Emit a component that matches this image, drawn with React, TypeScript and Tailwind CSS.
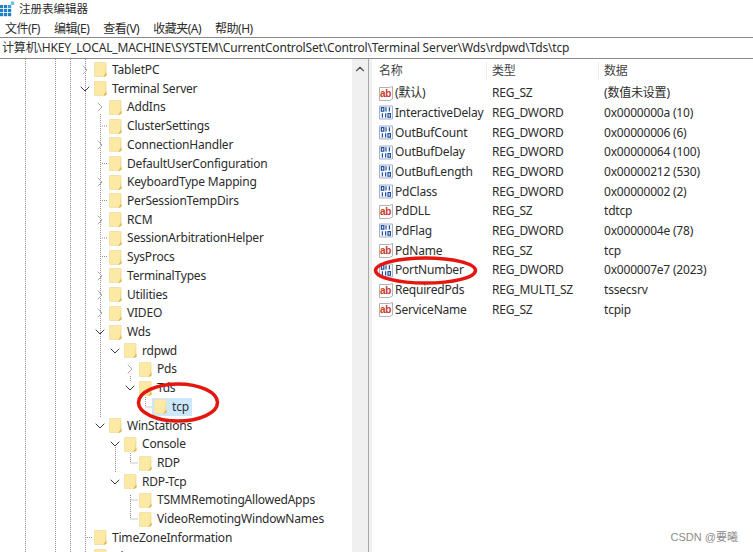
import React from 'react';
import { ChevronDown, ChevronRight, ChevronUp } from 'lucide-react';

type TreeRow = { label: string; level: number; arrow?: 'open' | 'closed'; selected?: boolean };

const treeRows: TreeRow[] = [
  { label: 'TabletPC', level: 0, arrow: 'closed' },
  { label: 'Terminal Server', level: 0, arrow: 'open' },
  { label: 'AddIns', level: 1, arrow: 'closed' },
  { label: 'ClusterSettings', level: 1 },
  { label: 'ConnectionHandler', level: 1, arrow: 'closed' },
  { label: 'DefaultUserConfiguration', level: 1 },
  { label: 'KeyboardType Mapping', level: 1, arrow: 'closed' },
  { label: 'PerSessionTempDirs', level: 1 },
  { label: 'RCM', level: 1, arrow: 'closed' },
  { label: 'SessionArbitrationHelper', level: 1 },
  { label: 'SysProcs', level: 1 },
  { label: 'TerminalTypes', level: 1, arrow: 'closed' },
  { label: 'Utilities', level: 1, arrow: 'closed' },
  { label: 'VIDEO', level: 1, arrow: 'closed' },
  { label: 'Wds', level: 1, arrow: 'open' },
  { label: 'rdpwd', level: 2, arrow: 'open' },
  { label: 'Pds', level: 3, arrow: 'closed' },
  { label: 'Tds', level: 3, arrow: 'open' },
  { label: 'tcp', level: 4, selected: true },
  { label: 'WinStations', level: 1, arrow: 'open' },
  { label: 'Console', level: 2, arrow: 'open' },
  { label: 'RDP', level: 3 },
  { label: 'RDP-Tcp', level: 2, arrow: 'open' },
  { label: 'TSMMRemotingAllowedApps', level: 3 },
  { label: 'VideoRemotingWindowNames', level: 3 },
  { label: 'TimeZoneInformation', level: 0 },
  { label: 'Ubpm', level: 0 },
];

const values: { name: string; type: string; data: string; kind: 'sz' | 'bin' }[] = [
  { name: '(默认)', type: 'REG_SZ', data: '(数值未设置)', kind: 'sz' },
  { name: 'InteractiveDelay', type: 'REG_DWORD', data: '0x0000000a (10)', kind: 'bin' },
  { name: 'OutBufCount', type: 'REG_DWORD', data: '0x00000006 (6)', kind: 'bin' },
  { name: 'OutBufDelay', type: 'REG_DWORD', data: '0x00000064 (100)', kind: 'bin' },
  { name: 'OutBufLength', type: 'REG_DWORD', data: '0x00000212 (530)', kind: 'bin' },
  { name: 'PdClass', type: 'REG_DWORD', data: '0x00000002 (2)', kind: 'bin' },
  { name: 'PdDLL', type: 'REG_SZ', data: 'tdtcp', kind: 'sz' },
  { name: 'PdFlag', type: 'REG_DWORD', data: '0x0000004e (78)', kind: 'bin' },
  { name: 'PdName', type: 'REG_SZ', data: 'tcp', kind: 'sz' },
  { name: 'PortNumber', type: 'REG_DWORD', data: '0x000007e7 (2023)', kind: 'bin' },
  { name: 'RequiredPds', type: 'REG_MULTI_SZ', data: 'tssecsrv', kind: 'sz' },
  { name: 'ServiceName', type: 'REG_SZ', data: 'tcpip', kind: 'sz' },
];

const menus = ['文件(F)', '编辑(E)', '查看(V)', '收藏夹(A)', '帮助(H)'];

const FolderIcon = () => (
  <svg width="13" height="15" viewBox="0 0 13 15" className="shrink-0">
    <path d="M0.5 0.5H12V13.5L11 14.5H0.5Z" fill="#fce9a3" stroke="#f1e3b0" />
    <path d="M11.5 1V13.5L10.5 14.5H9.5L11 12.5Z" fill="#e5c667" />
    <path d="M9.5 14.5L12.5 10.5V13.5L11 14.5Z" fill="#dcb44f" />
  </svg>
);

const SzIcon = () => (
  <svg width="14" height="15" viewBox="0 0 14 15" className="shrink-0">
    <path d="M0.5 1.5H10.5L13.5 0.5V13L10.5 14.5H0.5Z" fill="#fff" stroke="#b8b0b0" />
    <text x="6.6" y="10.5" textAnchor="middle" fontSize="10" fontWeight="700" fontFamily="Liberation Sans, sans-serif" fill="#c8382a">ab</text>
  </svg>
);

const BinIcon = () => (
  <svg width="14" height="15" viewBox="0 0 14 15" className="shrink-0">
    <path d="M0.5 1H13.5V14H0.5Z" fill="#f4f7fc" stroke="#a3b1cb" />
    <g fill="none" stroke="#23509e" strokeWidth="1.2">
      <rect x="2.4" y="2.6" width="2.4" height="3.6" />
      <path d="M7 2.2V6.6M10.4 2.2V6.6" />
      <path d="M3.4 8.2V12.6M6.6 8.2V12.6" />
      <rect x="9" y="8.6" width="2.4" height="3.6" />
    </g>
  </svg>
);

const RegeditIcon = () => (
  <svg width="15" height="16" viewBox="0 0 15 16" className="shrink-0">
    <g fill="#1f7fc4">
      <rect x="0" y="4" width="3.2" height="3.2" />
      <rect x="4" y="4" width="3.2" height="3.2" />
      <rect x="8" y="4" width="3.2" height="3.2" fill="#3c9ad6" />
      <rect x="0" y="8" width="3.2" height="3.2" />
      <rect x="4" y="8" width="3.2" height="3.2" />
      <rect x="8" y="8" width="3.2" height="3.2" />
      <rect x="0" y="12" width="3.2" height="3.2" />
      <rect x="4" y="12" width="3.2" height="3.2" />
      <rect x="8" y="12" width="3.2" height="3.2" />
    </g>
    <rect x="10.8" y="0.5" width="3.4" height="3.4" fill="#6fbce6" />
  </svg>
);

export default function App() {
  return (
    <div className="relative h-[552px] w-[753px] overflow-hidden bg-white font-['Noto_Sans','Noto_Sans_CJK_SC',sans-serif] text-[12px] tracking-[-0.2px] text-[#2c2c2c]">
      {/* title */}
      <div className="flex h-[17px] items-center gap-[4px] tracking-normal">
        <RegeditIcon />
        <span className="text-[11.5px] leading-none">注册表编辑器</span>
      </div>
      {/* menu */}
      <div className="flex h-[20px] items-center gap-[14px] pt-[3px] pl-[5px] tracking-[-0.5px]">
        {menus.map((m) => (
          <span key={m} className="leading-none">{m}</span>
        ))}
      </div>
      {/* address bar */}
      <div className="flex h-[22px] items-center border-y border-[#8a8a8a] pl-[2px] leading-none tracking-[-0.16px] whitespace-nowrap">
        计算机\HKEY_LOCAL_MACHINE\SYSTEM\CurrentControlSet\Control\Terminal Server\Wds\rdpwd\Tds\tcp
      </div>

      <div className="flex h-[493px]">
        {/* tree */}
        <div className="flex h-full w-[368px] shrink-0">
          <div className="relative min-w-0 flex-1 overflow-hidden pt-[1.6px]">
            <svg className="absolute inset-0" width="352" height="493">
              <g stroke="#8f8f8f" strokeDasharray="1 1" fill="none">
                <path d="M25.5 0V493M55.5 0V493M70.5 0V493M85.5 0V493" />
                <path d="M100.5 55V358" />
                <path d="M102 67H107M102 104.5H107M102 141.5H107M102 179H107M102 197.5H107" />
                <path d="M145.5 338V348H152" />
                <path d="M130.5 317V322" />
                <path d="M115.5 388V414" />
                <path d="M130.5 394V404H138" />
                <path d="M130.5 436V460H138M130.5 441H138" />
                <path d="M87 478.5H92" />
              </g>
            </svg>
            {treeRows.map((row) => (
              <div key={row.label} className="relative flex h-[18.72px] items-center" style={{ paddingLeft: 77 + row.level * 15 }}>
                <span className="flex w-[17px] shrink-0 items-center justify-start">
                  {row.arrow === 'open' && <ChevronDown size={16} strokeWidth={1.5} className="shrink-0 text-[#3c3c3c]" />}
                  {row.arrow === 'closed' && <ChevronRight size={16} strokeWidth={1.5} className="shrink-0 text-[#a8a8a8]" />}
                </span>
                <span className={row.selected ? '-ml-[2px] flex h-[18px] items-center bg-[#cce8ff] pr-[3px] pl-[2px]' : 'flex items-center'}>
                  <FolderIcon />
                  <span className="ml-[5px] leading-none whitespace-nowrap">{row.label}</span>
                </span>
              </div>
            ))}
          </div>
          {/* scrollbar */}
          <div className="flex w-[16px] shrink-0 justify-center bg-[#f0f0f0] pt-[3px]">
            <ChevronUp size={14} strokeWidth={2} className="text-[#505050]" />
          </div>
        </div>

        {/* splitter */}
        <div className="w-[4px] shrink-0 border-l border-[#a8a8a8] bg-[#f0f0f0]" />

        {/* values */}
        <div className="min-w-0 flex-1">
          <div className="flex h-[24.3px] items-center text-[#444]">
            <span className="w-[114px] pl-[7px]">名称</span>
            <span className="w-[112px] border-l border-[#ececec] pl-[5px]">类型</span>
            <span className="border-l border-[#ececec] pl-[5px]">数据</span>
          </div>
          {values.map((v) => (
            <div key={v.name} className="flex h-[19.7px] items-center whitespace-nowrap">
              <span className="flex w-[120px] items-center gap-[2px] pl-[7px]">
                {v.kind === 'sz' ? <SzIcon /> : <BinIcon />}
                <span>{v.name}</span>
              </span>
              <span className="w-[112px]">{v.type}</span>
              <span>{v.data}</span>
            </div>
          ))}
        </div>
      </div>

      {/* red marker circles drawn over the screenshot */}
      <svg className="pointer-events-none absolute inset-0" width="753" height="552">
        <g fill="none" stroke="#e3170f" strokeWidth="3.5">
          <ellipse cx="425.5" cy="270.5" rx="50" ry="12.5" />
          <ellipse cx="178" cy="402.5" rx="39.5" ry="18.5" />
        </g>
      </svg>

      {/* watermark */}
      <span className="absolute right-[15px] bottom-[9px] font-['Liberation_Sans','Noto_Sans_CJK_SC',sans-serif] text-[11px] leading-none tracking-normal text-[#8c8c8c]">CSDN @要曦</span>
    </div>
  );
}
